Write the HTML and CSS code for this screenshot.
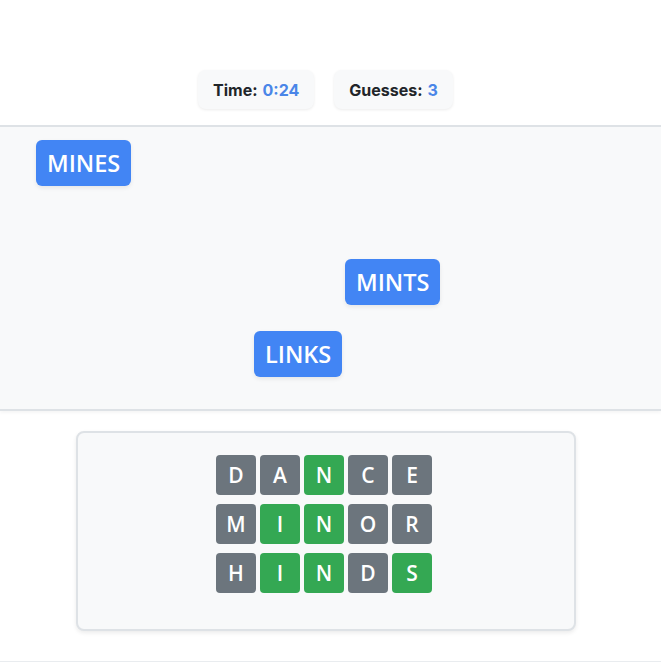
FILE: index.html
```html
<!DOCTYPE html>
<html>
<head>
<meta charset="utf-8">
<link rel="stylesheet" href="styles.css">
</head>
<body>
<header class="top">
  <div class="stats">
    <div class="stat">Time: <span class="val">0:24</span></div>
    <div class="stat">Guesses: <span class="val">3</span></div>
  </div>
</header>
<section class="play">
  <div class="word" style="left:36px;top:13px">MINES</div>
  <div class="word" style="left:345px;top:132px">MINTS</div>
  <div class="word" style="left:254px;top:204px">LINKS</div>
</section>
<main class="board-wrap">
  <div class="card">
    <div class="grid">
      <div class="row">
        <div class="tile gray">D</div><div class="tile gray">A</div><div class="tile green">N</div><div class="tile gray">C</div><div class="tile gray">E</div>
      </div>
      <div class="row">
        <div class="tile gray">M</div><div class="tile green">I</div><div class="tile green">N</div><div class="tile gray">O</div><div class="tile gray">R</div>
      </div>
      <div class="row">
        <div class="tile gray">H</div><div class="tile green">I</div><div class="tile green">N</div><div class="tile gray">D</div><div class="tile green">S</div>
      </div>
    </div>
  </div>
</main>
<footer class="foot"></footer>
</body>
</html>
```
FILE: styles.css
```css
* { box-sizing: border-box; }
html, body { margin: 0; padding: 0; background: #fff; }
body { font-family: "Open Sans", "Liberation Sans", sans-serif; color: #212529; }

.top {
  height: 125px;
  padding: 70px 10px 0 0;
}
.stats {
  display: flex;
  justify-content: center;
  gap: 20px;
}
.stat {
  height: 39px;
  padding: 0 15px;
  display: flex;
  align-items: center;
  gap: 5px;
  background: #f8f9fa;
  border-radius: 8px;
  box-shadow: 0 1px 3px rgba(0,0,0,0.08);
  font-family: "Inter", "Lato", sans-serif;
  font-weight: 700;
  font-size: 16px;
  color: #212529;
}
.stat .val { color: #4a86e8; }

.play {
  position: relative;
  height: 286px;
  background: #f8f9fa;
  border-top: 2px solid #dee2e6;
  border-bottom: 2px solid #dee2e6;
  box-shadow: 0 2px 3px rgba(0,0,0,0.04);
}
.word {
  position: absolute;
  padding: 5px 11px;
  background: #4285f4;
  color: #fff;
  border-radius: 6px;
  font-weight: 600;
  font-size: 23.5px;
  line-height: 36px;
  box-shadow: 0 2px 4px rgba(0,0,0,0.08);
}

.board-wrap {
  display: flex;
  justify-content: center;
  padding: 20px 10px 0 0;
}
.card {
  width: 500px;
  height: 200px;
  background: #f8f9fa;
  border: 2px solid #dee2e6;
  border-radius: 8px;
  box-shadow: 0 2px 4px rgba(0,0,0,0.08);
  padding-top: 22px;
  padding-right: 3px;
}
.grid {
  display: flex;
  flex-direction: column;
  align-items: center;
  gap: 9px;
}
.row {
  display: flex;
  gap: 4px;
}
.tile {
  width: 40px;
  height: 40px;
  border-radius: 4px;
  color: #fff;
  font-weight: 600;
  font-size: 21px;
  display: flex;
  align-items: center;
  justify-content: center;
}
.tile.gray { background: #6c757d; }
.tile.green { background: #34a853; }

.foot {
  margin-top: 30px;
  border-top: 1px solid #e9ecef;
  height: 10px;
}
```
